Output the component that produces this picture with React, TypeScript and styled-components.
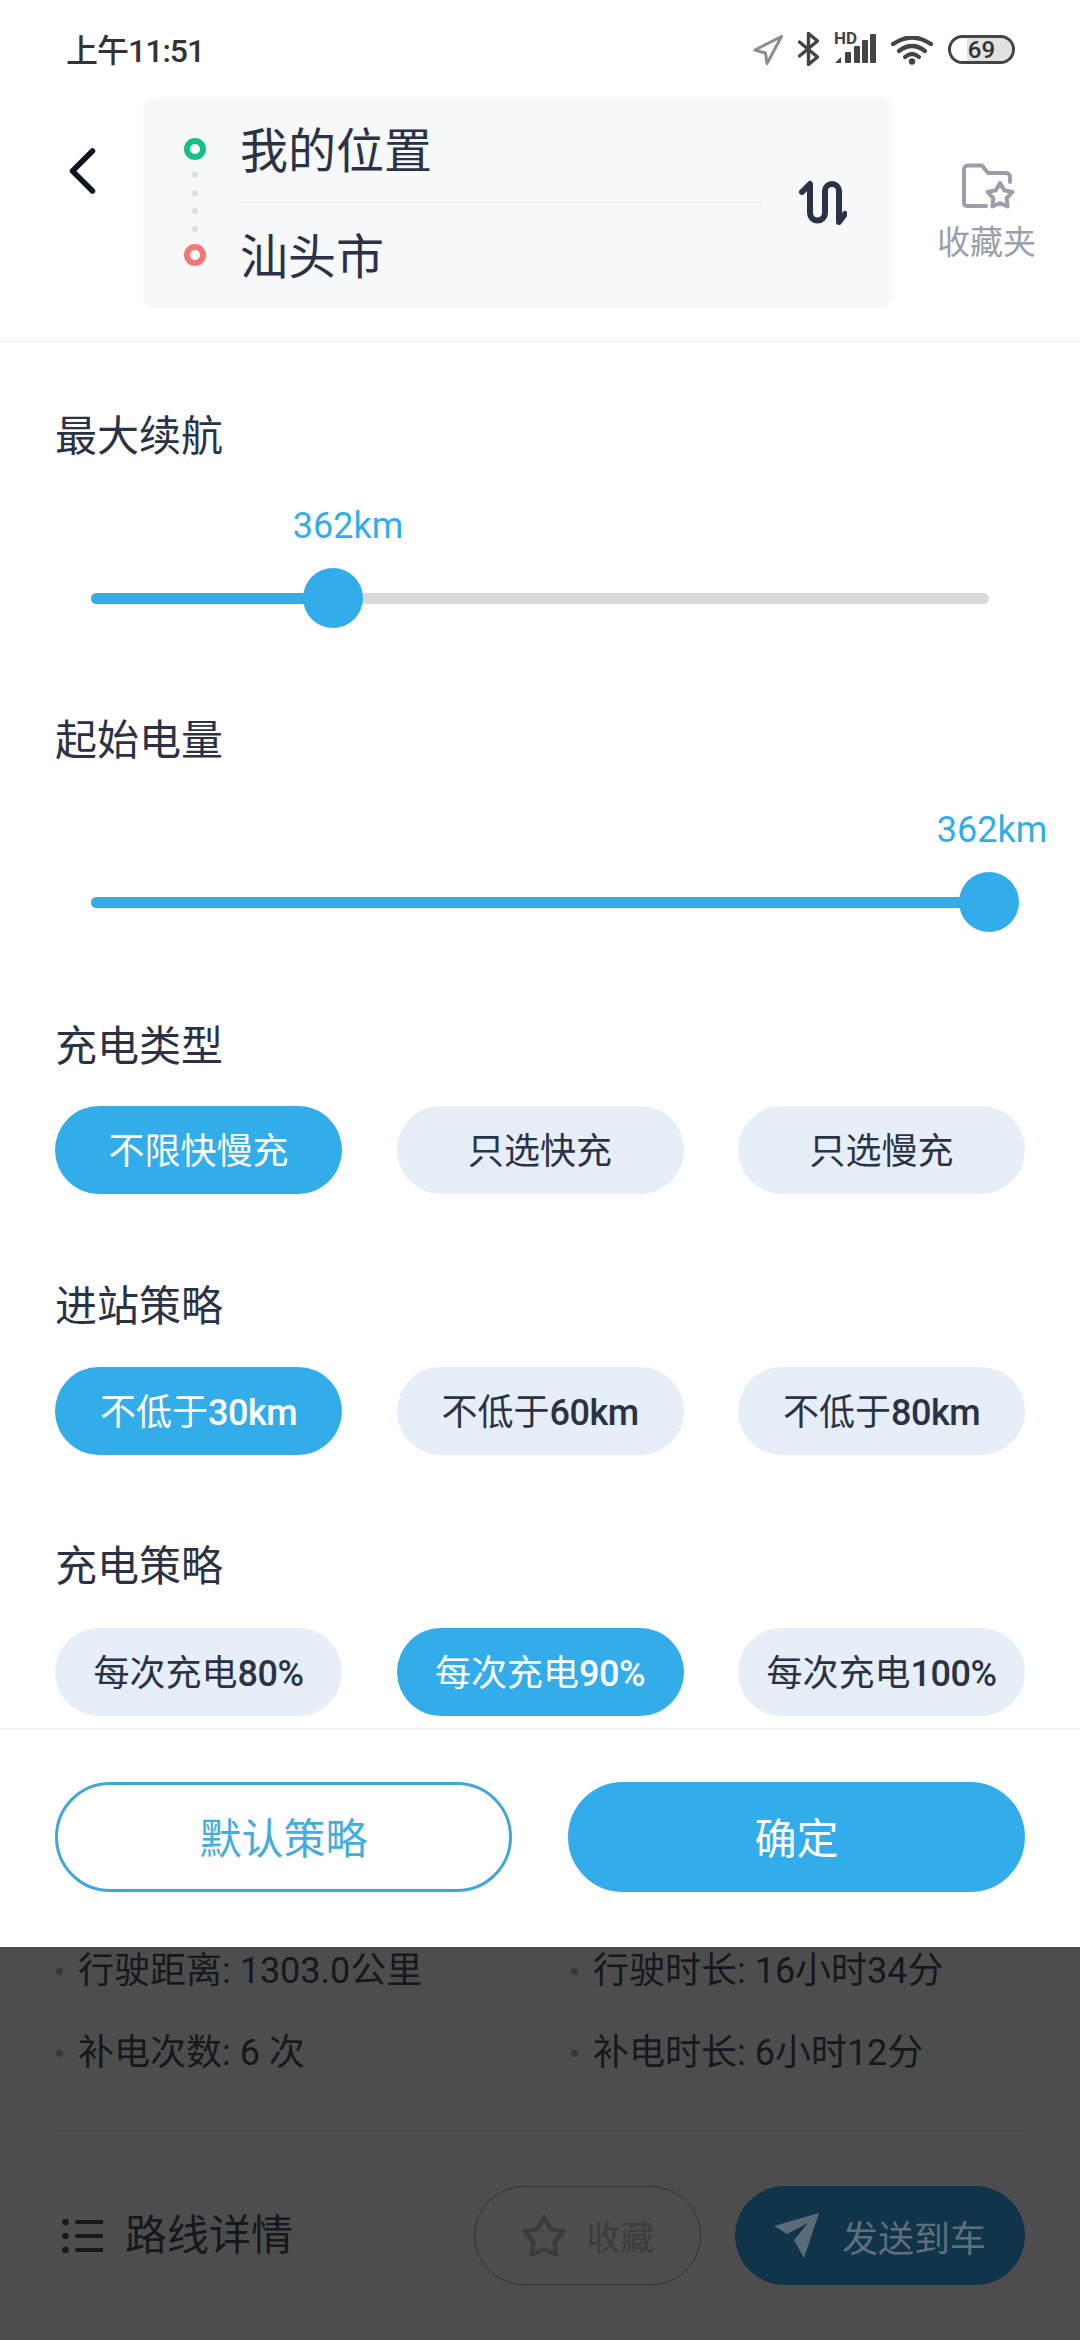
import React from "react";
import styled, { createGlobalStyle } from "styled-components";

const GlobalStyle = createGlobalStyle`
  html, body { margin: 0; padding: 0; background: #4d4d4d; }
  * { box-sizing: border-box; }
  body { font-family: Roboto, "Noto Sans CJK SC", sans-serif; }
`;

const BLUE = "#33ade9";
const INK = "#2b3245";

const Screen = styled.div`
  width: 1080px;
  height: 2340px;
  overflow: hidden;
  display: flex;
  flex-direction: column;
  background: #4d4d4d;
`;

const Sheet = styled.div`
  height: 1947px;
  flex: none;
  background: #fff;
  display: flex;
  flex-direction: column;
`;

/* status bar */
const StatusBar = styled.div`
  height: 98px;
  flex: none;
  padding: 0 65px 0 66px;
  display: flex;
  justify-content: space-between;
  align-items: flex-start;
`;
const Time = styled.div`
  margin-top: 29px;
  font-size: 32px;
  line-height: 44px;
  font-weight: 500;
  letter-spacing: -1px;
  color: #333;
`;
const StatusIcons = styled.div`
  margin-top: 32px;
  display: flex;
  align-items: flex-start;
  gap: 15px;
`;
const StatusSvg = styled.svg<{ $top?: number }>`
  display: block;
  flex: none;
  margin-top: ${(p) => p.$top ?? 0}px;
`;
const Signal = styled.div`
  position: relative;
  width: 42px;
  height: 30px;
  flex: none;
  margin-top: 1px;
`;
const HdTag = styled.span`
  position: absolute;
  left: 0;
  top: -2px;
  font-size: 17px;
  line-height: 15px;
  font-weight: 700;
  color: #444;
`;
const Battery = styled.div`
  width: 67px;
  height: 29px;
  flex: none;
  margin-top: 3px;
  border: 3.5px solid #444;
  border-radius: 15px;
  background: linear-gradient(to right, transparent 27%, #e2e2e2 27%);
  background-clip: padding-box;
  display: flex;
  align-items: center;
  justify-content: center;
  font-size: 24px;
  line-height: 22px;
  font-weight: 500;
  color: #333;
`;

/* header */
const Header = styled.div`
  height: 244px;
  flex: none;
  display: flex;
  align-items: flex-start;
  border-bottom: 1px solid #f1f2f4;
`;
const Back = styled.svg`
  flex: none;
  margin: 49px 46px 0 68px;
  display: block;
`;
const RouteBox = styled.div`
  width: 750px;
  height: 210px;
  flex: none;
  background: #f6f8fa;
  border-radius: 12px;
  display: flex;
  align-items: center;
`;
const Marks = styled.div`
  align-self: flex-start;
  flex: none;
  margin: 40px 35px 0 41px;
  display: flex;
  flex-direction: column;
  align-items: center;
  gap: 12px;
`;
const Ring = styled.div<{ $color: string }>`
  width: 22px;
  height: 22px;
  border-radius: 50%;
  border: 6px solid ${(p) => p.$color};
  background: #fff;
`;
const Dot = styled.div`
  width: 6px;
  height: 6px;
  border-radius: 50%;
  background: #dcdfe4;
`;
const Places = styled.div`
  width: 520px;
  flex: none;
  display: flex;
  flex-direction: column;
`;
const Place = styled.div<{ $line?: boolean }>`
  height: 105px;
  padding-bottom: 6px;
  display: flex;
  align-items: center;
  font-size: 48px;
  margin-left: -1px;
  color: ${INK};
  border-bottom: ${(p) => (p.$line ? "1px solid #eceef1" : "none")};
`;
const Swap = styled.svg`
  flex: none;
  margin-left: 38px;
  display: block;
`;
const Collect = styled.div`
  flex: 1;
  margin-top: 65px;
  display: flex;
  flex-direction: column;
  align-items: center;
`;
const FolderIcon = styled.svg`
  display: block;
  margin-left: 4px;
`;
const CollectLabel = styled.div`
  margin-top: 11px;
  font-size: 33px;
  line-height: 44px;
  color: #9a9fab;
`;

/* form */
const Form = styled.div`
  flex: 1;
  display: flex;
  flex-direction: column;
`;
const Section = styled.section<{ $top: number }>`
  margin-top: ${(p) => p.$top}px;
`;
const Title = styled.h3`
  margin: 0;
  padding: 0 55px;
  font-size: 42px;
  line-height: 60px;
  font-weight: 400;
  color: ${INK};
`;
const SliderArea = styled.div`
  margin-top: 101px;
  height: 60px;
  padding: 0 91px;
  display: flex;
  align-items: center;
`;
const Track = styled.div`
  position: relative;
  flex: 1;
  height: 11px;
  border-radius: 6px;
  background: #d9d9d9;
`;
const Fill = styled.div`
  height: 100%;
  border-radius: 6px;
  background: ${BLUE};
`;
const Thumb = styled.div`
  position: absolute;
  top: 50%;
  width: 60px;
  height: 60px;
  border-radius: 50%;
  background: ${BLUE};
  transform: translate(-50%, -50%);
`;
const ValueTag = styled.div`
  position: absolute;
  top: -89px;
  font-size: 36px;
  line-height: 44px;
  color: ${BLUE};
  transform: translateX(-50%);
  white-space: nowrap;
`;
const Options = styled.div<{ $top: number }>`
  margin-top: ${(p) => p.$top}px;
  padding: 0 55px;
  display: grid;
  grid-template-columns: repeat(3, 287px);
  justify-content: space-between;
`;
const Pill = styled.div<{ $on?: boolean }>`
  height: 88px;
  padding-bottom: 4px;
  border-radius: 44px;
  display: flex;
  align-items: center;
  justify-content: center;
  font-size: 36px;
  background: ${(p) => (p.$on ? BLUE : "#e6eef8")};
  color: ${(p) => (p.$on ? "#fff" : INK)};
`;
const Figure = styled.span`
  font-weight: 500;
  letter-spacing: -0.5px;
`;
const Footer = styled.div`
  margin-top: 12px;
  padding: 53px 55px 0;
  border-top: 1px solid #eeeff1;
  display: grid;
  grid-template-columns: 457px 457px;
  justify-content: space-between;
`;
const FooterButton = styled.div<{ $primary?: boolean }>`
  height: 110px;
  padding-bottom: 4px;
  border-radius: 55px;
  display: flex;
  align-items: center;
  justify-content: center;
  font-size: 42px;
  border: 3px solid ${(p) => (p.$primary ? BLUE : "#43a6d8")};
  background: ${(p) => (p.$primary ? BLUE : "#fff")};
  color: ${(p) => (p.$primary ? "#fff" : "#43aede")};
`;

/* dimmed page below the sheet */
const Dimmed = styled.div`
  flex: 1;
  padding: 0 55px;
  display: flex;
  flex-direction: column;
`;
const Stats = styled.div`
  padding-top: 4px;
  display: grid;
  grid-template-columns: 515px 1fr;
  grid-auto-rows: 82px;
  height: 184px;
  border-bottom: 1px solid #464646;
`;
const Stat = styled.div`
  height: 40px;
  display: flex;
  align-items: center;
  font-size: 36px;
  line-height: 40px;
  color: #15181d;
  white-space: nowrap;
  &::before {
    content: "";
    width: 7px;
    height: 7px;
    border-radius: 50%;
    background: #35383c;
    margin: 0 15px 0 1px;
  }
`;
const ActionBar = styled.div`
  margin-top: 55px;
  display: flex;
  align-items: center;
`;
const DetailLabel = styled.div`
  margin-left: 22px;
  font-size: 42px;
  line-height: 60px;
  color: #15181d;
`;
const ListIcon = styled.svg`
  display: block;
  margin-left: 7px;
`;
const SaveButton = styled.div`
  margin-left: auto;
  width: 227px;
  height: 99px;
  border-radius: 50px;
  border: 1px solid #303236;
  display: flex;
  align-items: center;
  justify-content: center;
  gap: 20px;
  font-size: 34px;
  color: #3a3c40;
`;
const SendButton = styled.div`
  margin-left: 34px;
  width: 290px;
  height: 99px;
  border-radius: 50px;
  background: #10344a;
  display: flex;
  align-items: center;
  justify-content: center;
  gap: 22px;
  font-size: 36px;
  color: #5f6f79;
`;

const star = (cx: number, cy: number, R: number, r: number) =>
  Array.from({ length: 10 }, (_, i) => {
    const a = (-90 + i * 36) * (Math.PI / 180);
    const d = i % 2 ? r : R;
    return `${(cx + d * Math.cos(a)).toFixed(1)},${(cy + d * Math.sin(a)).toFixed(1)}`;
  }).join(" ");

const Slider = ({ percent, shift }: { percent: number; shift: number }) => (
  <SliderArea>
    <Track>
      <Fill style={{ width: `${percent}%` }} />
      <ValueTag style={{ left: `calc(${percent}% + ${shift}px)` }}>362km</ValueTag>
      <Thumb style={{ left: `${percent}%` }} />
    </Track>
  </SliderArea>
);

const OptionRow = ({ top, items, active }: { top: number; items: string[]; active: number }) => (
  <Options $top={top}>
    {items.map((t, i) => (
      <Pill key={t} $on={i === active}>
        <span>
          {t.split(/(\d+(?:km|%))/).map((part, j) =>
            j % 2 ? <Figure key={j}>{part}</Figure> : part
          )}
        </span>
      </Pill>
    ))}
  </Options>
);

export default function App() {
  return (
    <Screen>
      <GlobalStyle />
      <Sheet>
        <StatusBar>
          <Time>上午11:51</Time>
          <StatusIcons>
            <StatusSvg $top={3} width="30" height="30" viewBox="0 0 30 30" fill="none" stroke="#8c8c8c" strokeWidth="3" strokeLinejoin="round">
              <path d="M28.5 1.500 2 15l10.500 3 1.500 10.500z" />
            </StatusSvg>
            <StatusSvg width="21" height="34" viewBox="0 0 21 34" fill="none" stroke="#444" strokeWidth="3.400" strokeLinecap="round" strokeLinejoin="round">
              <path d="M1.500 10 19.500 25l-9 7.500V1.500l9 7.500L1.500 24" />
            </StatusSvg>
            <Signal>
              <HdTag>HD</HdTag>
              <svg width="42" height="30" viewBox="0 0 42 30" fill="#444" style={{ display: "block" }}>
                <path d="M1 30l6-6v6z" />
                <rect x="11" y="19" width="6" height="11" rx="1" />
                <rect x="20" y="13" width="6" height="17" rx="1" />
                <rect x="28" y="7" width="6" height="23" rx="1" />
                <rect x="36" y="1" width="6" height="29" rx="1" />
              </svg>
            </Signal>
            <StatusSvg $top={4} width="42" height="29" viewBox="0 0 42 29" fill="none" stroke="#444" strokeWidth="4.200" strokeLinecap="round">
              <path d="M2 8Q21-5 40 8" />
              <path d="M8 15Q21 5 34 15" />
              <path d="M14 21Q21 15 28 21" />
              <circle cx="21" cy="25.500" r="3.200" fill="#444" stroke="none" />
            </StatusSvg>
            <Battery>69</Battery>
          </StatusIcons>
        </StatusBar>

        <Header>
          <Back width="29" height="48" viewBox="0 0 29 48" fill="none" stroke="#10151f" strokeWidth="5.500" strokeLinecap="round" strokeLinejoin="round">
            <path d="M24.500 4 4.500 24l20 20" />
          </Back>
          <RouteBox>
            <Marks>
              <Ring $color="#12c285" />
              <Dot />
              <Dot />
              <Dot />
              <Dot />
              <Ring $color="#f67676" />
            </Marks>
            <Places>
              <Place $line>我的位置</Place>
              <Place>汕头市</Place>
            </Places>
            <Swap width="48" height="46" viewBox="0 0 48 46" fill="none" stroke={INK} strokeWidth="6" strokeLinecap="round" strokeLinejoin="round">
              <path d="M3 12l8-8v29a7.500 7.500 0 0 0 15 0V11a7 7 0 0 1 14 0v31l6-8" />
            </Swap>
          </RouteBox>
          <Collect>
            <FolderIcon width="53" height="47" viewBox="0 0 53 47" fill="none" stroke="#9a9fab" strokeWidth="4" strokeLinecap="round" strokeLinejoin="round">
              <path d="M48 19v-5a4 4 0 0 0-4-4H26l-6-7.500H6a4 4 0 0 0-4 4V40a3 3 0 0 0 3 3h19" />
              <polygon points={star(38, 33, 13, 7)} />
            </FolderIcon>
            <CollectLabel>收藏夹</CollectLabel>
          </Collect>
        </Header>

        <Form>
          <Section $top={65}>
            <Title>最大续航</Title>
            <Slider percent={26.95} shift={15} />
          </Section>
          <Section $top={83}>
            <Title>起始电量</Title>
            <Slider percent={100} shift={3} />
          </Section>
          <Section $top={85}>
            <Title>充电类型</Title>
            <OptionRow top={29} items={["不限快慢充", "只选快充", "只选慢充"]} active={0} />
          </Section>
          <Section $top={83}>
            <Title>进站策略</Title>
            <OptionRow top={30} items={["不低于30km", "不低于60km", "不低于80km"]} active={0} />
          </Section>
          <Section $top={82}>
            <Title>充电策略</Title>
            <OptionRow top={31} items={["每次充电80%", "每次充电90%", "每次充电100%"]} active={1} />
          </Section>
          <Footer>
            <FooterButton>默认策略</FooterButton>
            <FooterButton $primary>确定</FooterButton>
          </Footer>
        </Form>
      </Sheet>

      <Dimmed>
        <Stats>
          <Stat>行驶距离: 1303.0公里</Stat>
          <Stat>行驶时长: 16小时34分</Stat>
          <Stat>补电次数: 6 次</Stat>
          <Stat>补电时长: 6小时12分</Stat>
        </Stats>
        <ActionBar>
          <ListIcon width="41" height="34" viewBox="0 0 41 34" fill="#15181d">
            <circle cx="3.500" cy="3" r="3.300" />
            <circle cx="3.500" cy="17" r="3.300" />
            <circle cx="3.500" cy="31" r="3.300" />
            <path d="M15 3h25M15 17h25M15 31h25" stroke="#15181d" strokeWidth="4" strokeLinecap="round" />
          </ListIcon>
          <DetailLabel>路线详情</DetailLabel>
          <SaveButton>
            <svg width="46" height="46" viewBox="0 0 46 46" fill="none" stroke="#3a3c40" strokeWidth="4.500" strokeLinejoin="round" style={{ display: "block" }}>
              <polygon points={star(23, 25, 21, 11)} />
            </svg>
            收藏
          </SaveButton>
          <SendButton>
            <svg width="46" height="47" viewBox="0 0 46 47" fill="#5a6b76" style={{ display: "block" }}>
              <polygon points="45,1 0,14 13,22 34,11 20,28 30,46" />
            </svg>
            发送到车
          </SendButton>
        </ActionBar>
      </Dimmed>
    </Screen>
  );
}
